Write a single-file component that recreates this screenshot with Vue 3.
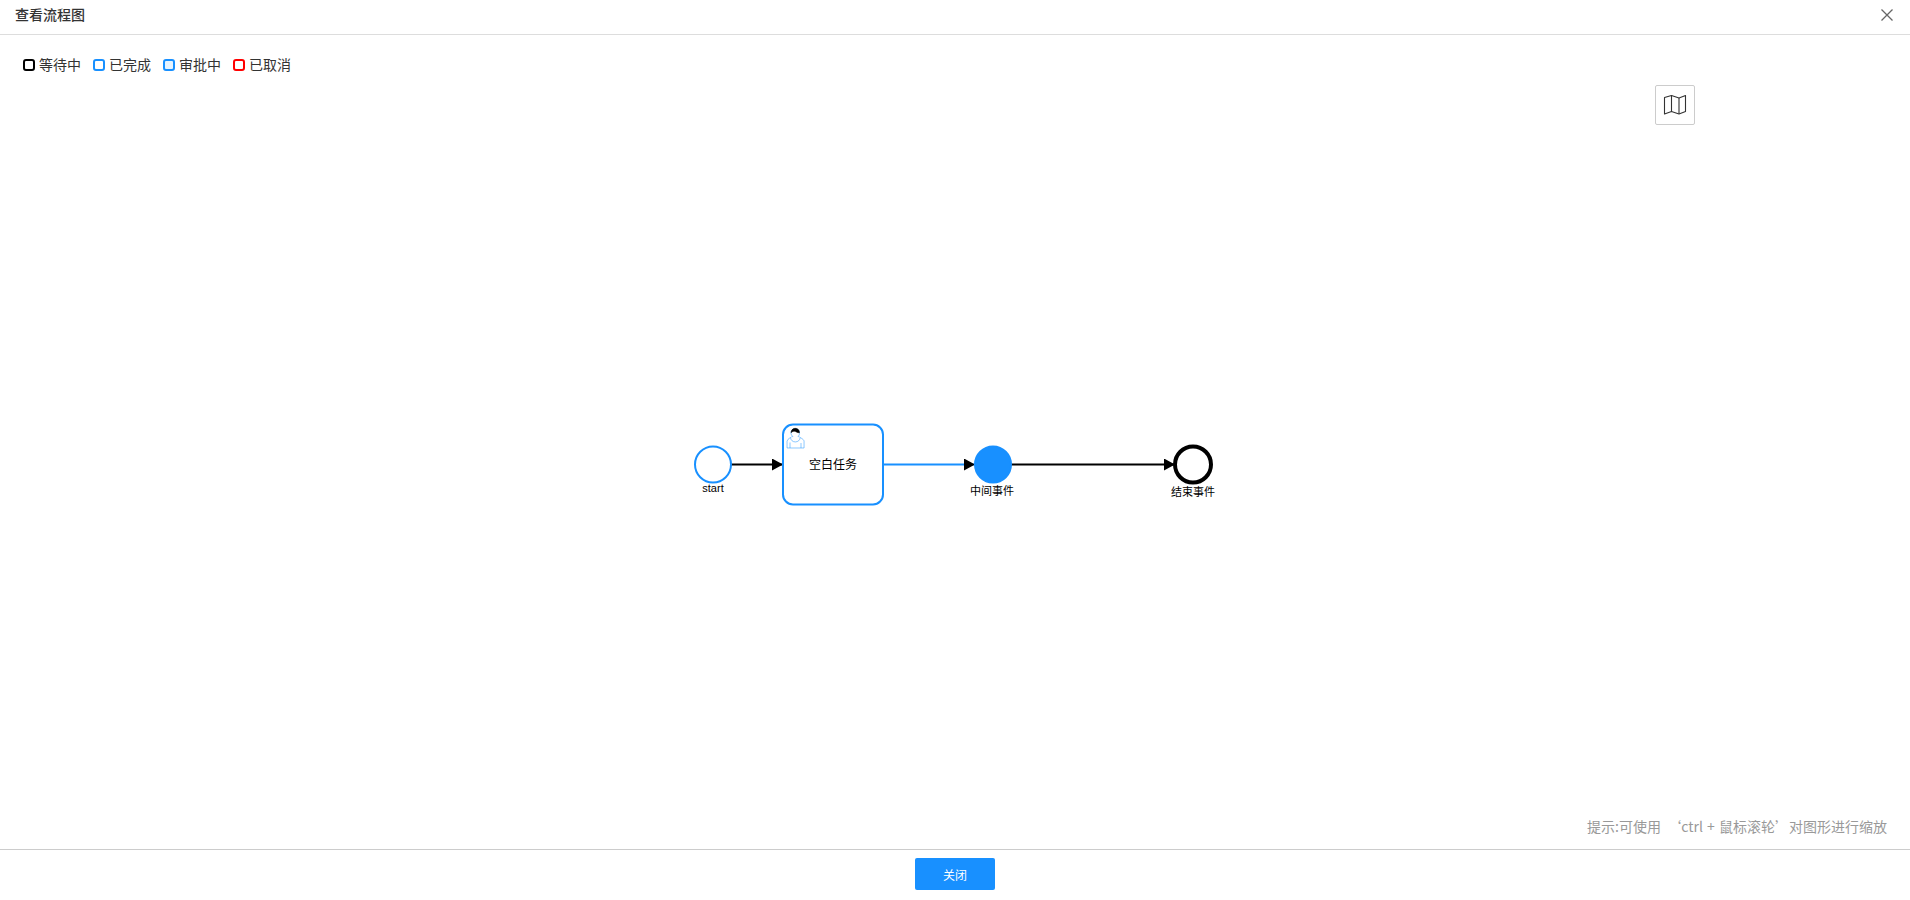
<template>
  <div class="dialog">
    <header class="dialog-header">
      <span class="dialog-title">查看流程图</span>
      <button class="close-btn" aria-label="关闭">
        <svg width="14" height="14" viewBox="0 0 14 14">
          <path d="M1.5 1.5 L12.5 12.5 M12.5 1.5 L1.5 12.5" stroke="#666" stroke-width="1.3" fill="none" />
        </svg>
      </button>
    </header>

    <main class="dialog-body">
      <ul class="legend">
        <li v-for="item in legend" :key="item.label" class="legend-item">
          <i class="legend-box" :style="{ borderColor: item.color, background: item.fill }"></i>
          <span class="legend-text">{{ item.label }}</span>
        </li>
      </ul>

      <svg class="canvas" viewBox="0 35 1910 814" width="1910" height="814">
        <defs>
          <marker id="arrow" viewBox="0 0 11 12" refX="11" refY="6" markerWidth="11" markerHeight="12" orient="auto" markerUnits="userSpaceOnUse">
            <path d="M0 0 L11 6 L0 12 Z" fill="#000" />
          </marker>
        </defs>

        <path d="M731 464.5 H783" class="flow" marker-end="url(#arrow)" />
        <path d="M883 464.5 H975" class="flow flow-active" marker-end="url(#arrow)" />
        <path d="M1011 464.5 H1175" class="flow" marker-end="url(#arrow)" />

        <circle cx="713" cy="464.5" r="18" class="node" />
        <text x="713" y="492" class="label">start</text>

        <rect x="783" y="424.5" width="100" height="80" rx="10" class="node" />
        <!-- user task marker, same shapes bpmn-js draws -->
        <g class="user-icon" transform="translate(798 436.5)">
          <path d="m0 0 c0.909,-0.845 1.594,-2.049 1.594,-3.385 0,-2.554 -1.805,-4.622 -4.357,-4.622 -2.552,0 -4.288,2.068 -4.288,4.622 0,1.348 0.974,2.562 1.896,3.405 -0.529,0.187 -5.669,2.097 -5.794,4.756 v6.718 h17 v-6.718 c0,-2.298 -5.528,-4.595 -6.051,-4.776 z m-8,6 l0,5.5 m11,0 l0,-5" />
          <path d="m2.162 1.009 c0,2.447 -2.158,4.431 -4.821,4.431 -2.665,0 -4.822,-1.981 -4.822,-4.431" />
          <path class="user-hair" d="m-6.9 -3.8 c0,0 2.251,-2.358 4.274,-1.177 2.024,1.181 4.221,1.537 4.124,0.965 -0.098,-0.57 -0.117,-3.791 -4.191,-4.136 -3.575,0.001 -4.208,3.367 -4.207,4.348 z" />
        </g>
        <text x="833" y="469" class="label label-task">空白任务</text>

        <circle cx="993" cy="464.5" r="18" class="node-filled" />
        <text x="992" y="495" class="label">中间事件</text>

        <circle cx="1193" cy="464.5" r="18" class="node-end" />
        <text x="1193" y="496" class="label">结束事件</text>
      </svg>

      <button class="map-btn" aria-label="小地图">
        <svg width="24" height="24" viewBox="0 0 24 24" fill="none" stroke="#333" stroke-width="1.1" stroke-linejoin="round">
          <path d="M1.5 4.5 L8.5 2.5 L16 5 L22.5 2.5 V18.5 L16 21 L8.5 18.5 L1.5 21 Z" />
          <path d="M8.5 2.5 V18.5 M16 5 V21" />
        </svg>
      </button>

      <p class="hint">提示:可使用 &nbsp;‘<span class="hint-keys">ctrl + 鼠标滚轮</span>’对图形进行缩放</p>
    </main>

    <footer class="dialog-footer">
      <button class="primary-btn">关闭</button>
    </footer>
  </div>
</template>

<script setup>
const legend = [
  { label: '等待中', color: '#000000', fill: '#ffffff' },
  { label: '已完成', color: '#1890ff', fill: '#ffffff' },
  { label: '审批中', color: '#1890ff', fill: '#e6f4ff' },
  { label: '已取消', color: '#ff0000', fill: '#ffffff' }
]
</script>

<style>
html, body {
  margin: 0;
  background: #fff;
}
</style>

<style scoped>
.dialog {
  width: 1910px;
  height: 900px;
  display: flex;
  flex-direction: column;
  overflow: hidden;
  font-family: "Noto Sans CJK SC", "Liberation Sans", sans-serif;
  font-size: 14px;
  color: #333;
}

.dialog-header {
  flex: none;
  height: 34px;
  padding: 0 15px;
  display: flex;
  align-items: center;
  justify-content: space-between;
  border-bottom: 1px solid #ddd;
}

.dialog-title {
  margin-top: -6px;
  font-weight: 500;
  line-height: 20px;
}

.close-btn {
  width: 14px;
  height: 14px;
  margin: -5px 1px 0 0;
  padding: 0;
  border: 0;
  background: none;
  display: flex;
}

.dialog-body {
  flex: 1;
  position: relative;
}

.legend {
  position: relative;
  z-index: 1;
  margin: 0;
  padding: 20px 0 0 23px;
  list-style: none;
  display: flex;
  gap: 12px;
}

.legend-item {
  display: flex;
  align-items: center;
  gap: 4px;
  line-height: 20px;
}

.legend-box {
  width: 12px;
  height: 12px;
  box-sizing: border-box;
  border: 2px solid;
  border-radius: 3px;
}

.legend-text {
  margin-top: -1px;
}

.canvas {
  position: absolute;
  left: 0;
  top: 0;
}

.flow {
  fill: none;
  stroke: #000;
  stroke-width: 2;
}

.flow-active {
  stroke: #1890ff;
}

.node {
  fill: #fff;
  stroke: #1890ff;
  stroke-width: 2;
}

.node-filled {
  fill: #1890ff;
  stroke: #1890ff;
  stroke-width: 2;
}

.node-end {
  fill: #fff;
  stroke: #000;
  stroke-width: 4;
}

.user-icon path {
  fill: #fff;
  stroke: #1890ff;
  stroke-width: 0.5;
}

.user-icon .user-hair {
  fill: #000;
  stroke: #000;
}

.label {
  font-family: "Liberation Sans", "Noto Sans CJK SC", sans-serif;
  font-size: 11px;
  text-anchor: middle;
  fill: #000;
}

.label-task {
  font-size: 12px;
}

.map-btn {
  position: absolute;
  left: 1655px;
  top: 50px;
  width: 40px;
  height: 40px;
  box-sizing: border-box;
  padding: 0;
  border: 1px solid #ccc;
  border-radius: 2px;
  background: #fff;
  display: flex;
  align-items: center;
  justify-content: center;
}

.hint {
  position: absolute;
  right: 23px;
  bottom: 13px;
  margin: 0;
  line-height: 20px;
  color: #999;
  white-space: nowrap;
}

.hint-keys {
  word-spacing: 1px;
}

.dialog-footer {
  flex: none;
  height: 42px;
  border-top: 1px solid #ccc;
  display: flex;
  justify-content: center;
  padding-top: 8px;
}

.primary-btn {
  width: 80px;
  height: 32px;
  padding: 0;
  border: 0;
  border-radius: 2px;
  background: #1890ff;
  color: #fff;
  font: inherit;
  font-size: 12px;
}
</style>
